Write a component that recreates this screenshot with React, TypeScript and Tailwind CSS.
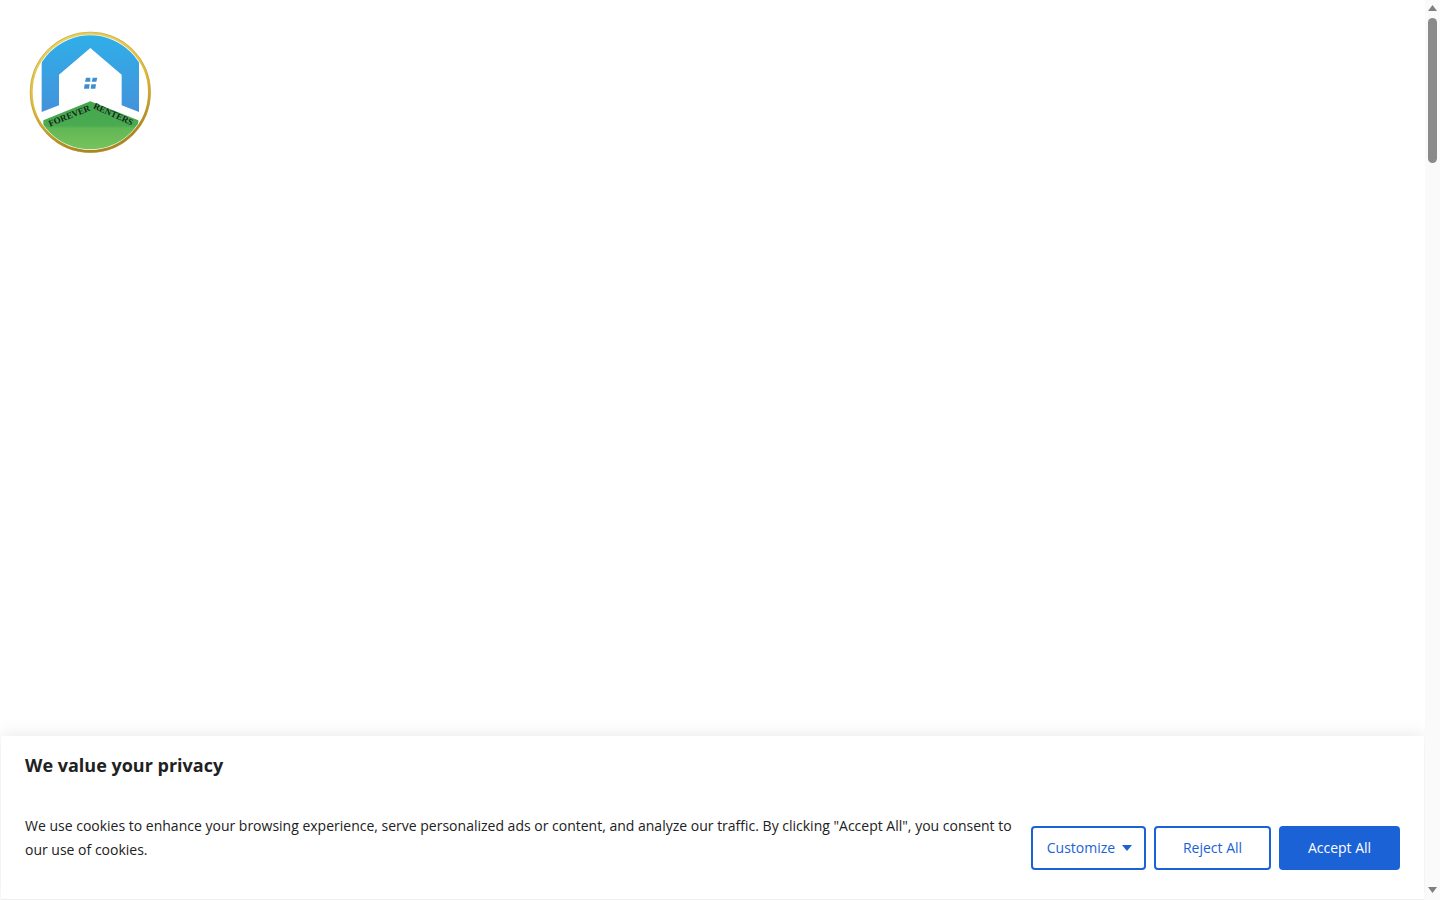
import React from 'react';

const Logo: React.FC = () => (
    <svg width="140" height="140" viewBox="0 0 420 420" className="block">
        <defs>
            <clipPath id="disc">
                <circle cx="211" cy="211" r="171" />
            </clipPath>
            <linearGradient id="ring" x1="0" y1="0" x2="0.3" y2="1">
                <stop offset="0%" stopColor="#ecd768" />
                <stop offset="60%" stopColor="#dcb93a" />
                <stop offset="100%" stopColor="#a9861f" />
            </linearGradient>
            <linearGradient id="sky" x1="0" y1="0" x2="0" y2="1">
                <stop offset="0%" stopColor="#2fb0ea" />
                <stop offset="100%" stopColor="#4392da" />
            </linearGradient>
            <linearGradient id="grass" x1="0" y1="0" x2="0" y2="1">
                <stop offset="0%" stopColor="#43a54e" />
                <stop offset="45%" stopColor="#4aab50" />
                <stop offset="50%" stopColor="#62b755" />
                <stop offset="100%" stopColor="#7cc75e" />
            </linearGradient>
            <path id="roofLeft" d="M90 314 L250 250" />
            <path id="roofRight" d="M218 258 L390 336" />
        </defs>
        <circle cx="211" cy="211" r="177" fill="#fff" stroke="url(#ring)" strokeWidth="8" />
        <circle cx="211" cy="211" r="181" fill="none" stroke="#b8952a" strokeWidth="1.5" />
        <g clipPath="url(#disc)">
            <path d="M65 30 H357 V270 L305 250 V158 L211 78 L117 158 V250 L65 270 Z" fill="url(#sky)" />
            <path d="M211 238 L70 295 V400 H355 V295 Z" fill="url(#grass)" />
        </g>
        <g fill="#3f8fcf">
            <path d="M198 167 H211 V179 H195 Z" />
            <path d="M218 167 H232 L229 179 H215 Z" />
            <path d="M194 187 H209 L207 200 H192 Z" />
            <path d="M214 187 H228 L226 200 H212 Z" />
        </g>
        <g fontFamily="'Liberation Serif', serif" fontSize="27" fontWeight="700" fill="#14261a">
            <text>
                <textPath href="#roofLeft">FOREVER</textPath>
            </text>
            <text>
                <textPath href="#roofRight">RENTERS</textPath>
            </text>
        </g>
    </svg>
);

const Scrollbar: React.FC = () => (
    <div className="w-[15px] h-full shrink-0 bg-[#fafafa] flex flex-col items-center">
        <svg width="9" height="6" viewBox="0 0 9 6" className="mt-[5px] shrink-0">
            <path d="M0 6 L4.5 0 L9 6 Z" fill="#7f7f7f" />
        </svg>
        <div className="w-[9px] h-[145px] mt-[7px] rounded-full bg-[#8a8a8a]" />
        <svg width="9" height="6" viewBox="0 0 9 6" className="mt-auto mb-[7px] shrink-0">
            <path d="M0 0 L9 0 L4.5 6 Z" fill="#7f7f7f" />
        </svg>
    </div>
);

const outlineBtn =
    'h-[44px] border-2 border-[#1a62d6] rounded bg-white text-[#1a62d6] text-sm flex items-center justify-center';

export default function App() {
    return (
        <div className="h-[900px] w-full overflow-hidden bg-white flex font-['Open_Sans',sans-serif]">
            <div className="flex-1 min-w-0 flex flex-col justify-between">
                <div className="pt-[22px] pl-5">
                    <Logo />
                </div>
                <section className="ml-px mr-px h-[164px] bg-white px-6 pt-[16px] border-b border-[#eeeeee] shadow-[0_0_18px_rgba(0,0,0,0.1)]">
                    <h2 className="text-lg leading-[27px] font-bold text-[#212121]">We value your privacy</h2>
                    <div className="mt-[35px] flex items-start">
                        <p className="w-[990px] shrink-0 text-sm leading-6 text-[#212121]">
                            We use cookies to enhance your browsing experience, serve personalized ads or content, and
                            analyze our traffic. By clicking "Accept All", you consent to our use of cookies.
                        </p>
                        <div className="ml-4 mt-3 flex gap-2">
                            <button className={`${outlineBtn} w-[115px] gap-[7px] pl-[2px]`}>
                                Customize
                                <svg width="10" height="6" viewBox="0 0 10 6">
                                    <path d="M0 0 H10 L5 6 Z" fill="#1a62d6" />
                                </svg>
                            </button>
                            <button className={`${outlineBtn} w-[117px]`}>Reject All</button>
                            <button className="h-[44px] w-[121px] rounded bg-[#1a62d6] text-white text-sm">Accept All</button>
                        </div>
                    </div>
                </section>
            </div>
            <Scrollbar />
        </div>
    );
}
